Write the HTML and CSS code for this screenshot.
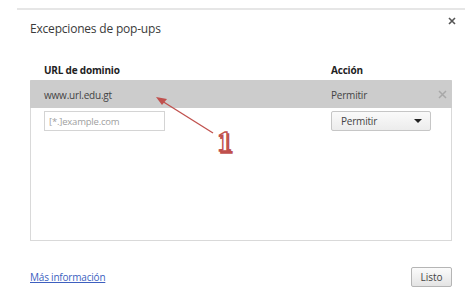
FILE: index.html
```html
<!DOCTYPE html>
<html lang="es">
<head>
<meta charset="utf-8">
<title>Excepciones de pop-ups</title>
<link rel="stylesheet" href="styles.css">
</head>
<body>
<div class="topline"></div>
<div class="dialog">
  <div class="title-row">
    <h1 class="title">Excepciones de pop-ups</h1>
    <svg class="close" width="8" height="8" viewBox="0 0 8 8"><path d="M1 1L7 7M7 1L1 7" stroke="#555" stroke-width="1.6"/></svg>
  </div>
  <div class="cols heads">
    <span>URL de dominio</span>
    <span>Acción</span>
  </div>
  <div class="list">
    <div class="cols row sel">
      <span>www.url.edu.gt</span>
      <span>Permitir</span>
      <svg class="rm" width="9" height="9" viewBox="0 0 9 9"><path d="M1 1L8 8M8 1L1 8" stroke="#a8a8a8" stroke-width="1.5"/></svg>
    </div>
    <div class="cols row edit">
      <span class="input">[*.]example.com</span>
      <span class="select">Permitir<i class="caret"></i></span>
    </div>
  </div>
  <div class="footer">
    <a class="link" href="#">Más información</a>
    <span class="btn">Listo</span>
  </div>
</div>
<svg class="note" width="475" height="303" viewBox="0 0 475 303">
  <line x1="213" y1="133" x2="162" y2="101" stroke="#c0504d" stroke-width="1.3"/>
  <polygon points="156,97 167,99 162,105" fill="#c0504d"/>
  <text x="218.5" y="152.5" font-family="Liberation Serif" font-weight="bold" font-size="30" fill="#c0504d" stroke="#c0504d" stroke-width="1.5">1</text>
  <text x="217" y="151" font-family="Liberation Serif" font-weight="bold" font-size="30" fill="#fff" stroke="#c0504d" stroke-width="1.4">1</text>
</svg>
</body>
</html>
```
FILE: styles.css
```css
* { box-sizing: border-box; }
body {
  margin: 0;
  width: 475px;
  height: 303px;
  background: #fff;
  font-family: "Open Sans", "Noto Sans", sans-serif;
  color: #333;
  position: relative;
  overflow: hidden;
}
.topline {
  margin: 8px 0 0 17px;
  width: 448px;
  height: 2px;
  background: #e6e6e6;
}
.dialog {
  width: 456px;
  padding-left: 30px;
}
.title-row {
  display: flex;
  justify-content: space-between;
  align-items: flex-start;
}
.title {
  margin: 11px 0 0 0;
  font-size: 12px;
  letter-spacing: -0.2px;
  font-weight: normal;
  line-height: 16px;
  color: #3a3a3a;
}
.close {
  margin-top: 7px;
}
.cols {
  display: grid;
  grid-template-columns: 287px 1fr 24px;
  align-items: center;
}
.heads {
  margin-top: 26px;
  padding-left: 14px;
  font-size: 10px;
  letter-spacing: -0.2px;
  font-weight: bold;
  line-height: 14px;
  color: #222;
}
.list {
  margin-top: 3px;
  width: 422px;
  height: 161px;
  border: 1px solid #d9d9d9;
  border-top-color: #cccccc;
}
.row {
  padding-left: 13px;
  font-size: 10px;
  letter-spacing: -0.2px;
  color: #444;
}
.sel {
  height: 27px;
  margin: 0 -1px;
  padding-left: 14px;
  background: #cccccc;
}
.rm {
  justify-self: center;
  margin-left: 4px;
}
.edit {
  margin-top: 3px;
}
.input {
  width: 121px;
  height: 20px;
  border: 1px solid #d4d4d4;
  padding-left: 4px;
  display: flex;
  align-items: center;
  color: #a0a0a0;
  font-size: 9.5px;
}
.select {
  width: 100px;
  height: 20px;
  border: 1px solid #c6c6c6;
  border-radius: 2px;
  background: linear-gradient(#fafafa, #ececec);
  padding: 0 8px 0 9px;
  display: flex;
  align-items: center;
  justify-content: space-between;
  color: #444;
  font-size: 10px;
}
.caret {
  width: 0;
  height: 0;
  border-left: 4px solid transparent;
  border-right: 4px solid transparent;
  border-top: 4px solid #222;
}
.footer {
  margin-top: 26px;
  width: 422px;
  display: flex;
  justify-content: space-between;
  align-items: center;
}
.link {
  color: #3d5fbf;
  font-size: 10px;
  letter-spacing: -0.2px;
  text-decoration: underline;
}
.btn {
  width: 41px;
  height: 20px;
  border: 1px solid #b5b5b5;
  border-radius: 2px;
  background: linear-gradient(#fbfbfb, #e4e4e4);
  display: flex;
  align-items: center;
  justify-content: center;
  font-size: 10px;
  color: #444;
}
.note {
  position: absolute;
  left: 0;
  top: 0;
  pointer-events: none;
}
```
